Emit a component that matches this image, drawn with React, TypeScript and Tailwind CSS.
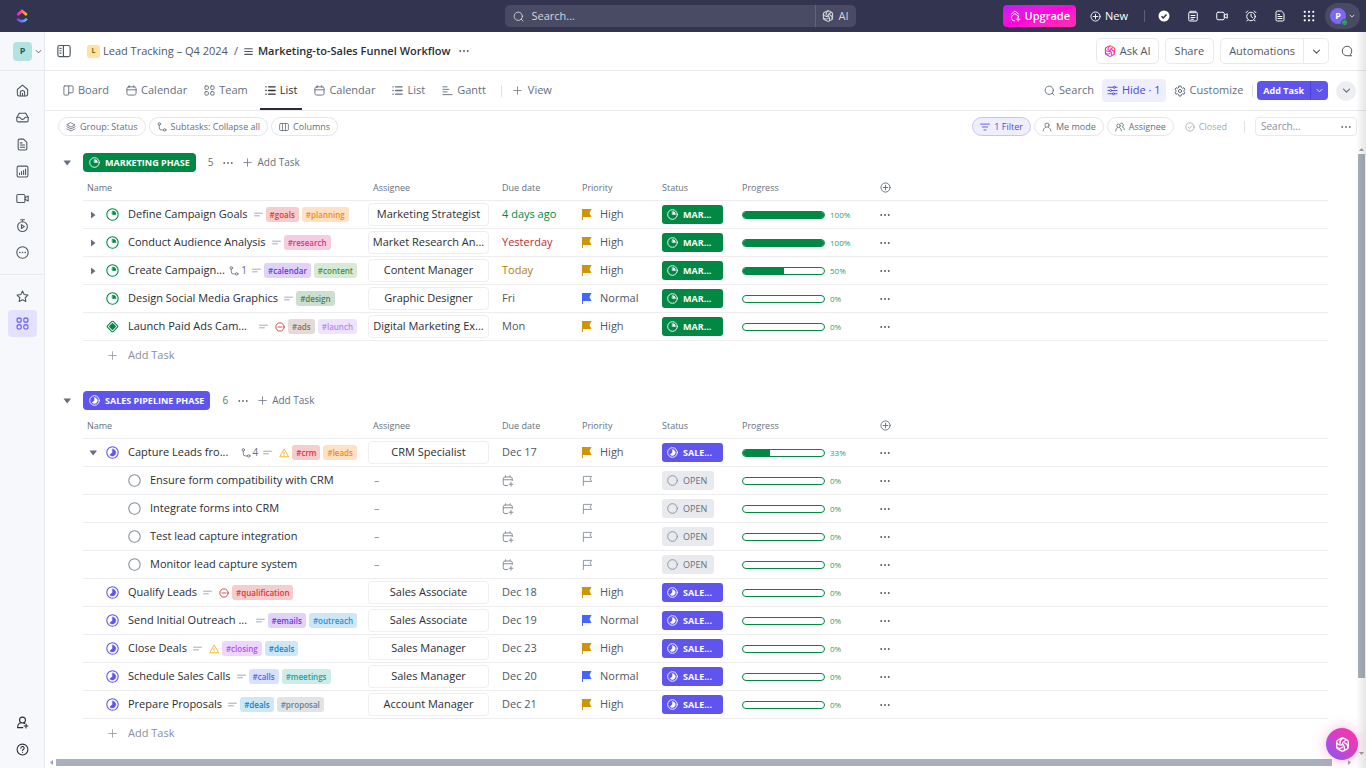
import { type ReactNode } from "react"

type IconProps = { className?: string; sw?: number; children?: ReactNode }

function Svg({ className = "size-3", sw = 2, children }: IconProps) {
  return (
    <svg
      className={`shrink-0 ${className}`}
      viewBox="0 0 24 24"
      fill="none"
      stroke="currentColor"
      strokeWidth={sw}
      strokeLinecap="round"
      strokeLinejoin="round"
      aria-hidden="true"
    >
      {children}
    </svg>
  )
}

const paths: Record<string, ReactNode> = {
  home: (
    <>
      <path d="M2.5 10.2 12 2l9.5 8.2V19a3 3 0 0 1-3 3h-13a3 3 0 0 1-3-3z" />
      <path d="M8 21.5V16a4 4 0 0 1 8 0v5.500M12 21.5V17" />
    </>
  ),
  inbox: (
    <>
      <path d="M1.5 12.500 5 5.500A3 3 0 0 1 7.700 4h8.600A3 3 0 0 1 19 5.500l3.500 7V17a3 3 0 0 1-3 3h-15a3 3 0 0 1-3-3z" />
      <path d="M1.5 11.500H6c1 0 1.500.5 2 1.500a4.500 4.500 0 0 0 8 0c.5-1 1-1.500 2-1.500h4.500" />
    </>
  ),
  doc: (
    <>
      <path d="M14 2H6.500A2.500 2.500 0 0 0 4 4.500v15A2.500 2.500 0 0 0 6.500 22h11a2.500 2.500 0 0 0 2.500-2.500V8z" />
      <path d="M8 9h3M8 13h8M8 17h8" />
    </>
  ),
  chart: (
    <>
      <rect x="2" y="2" width="20" height="20" rx="3" />
      <path d="M6.500 17.500V15M10.200 17.500V12M14 17.500V10M17.700 17.500V7.500" />
    </>
  ),
  video: (
    <>
      <rect x="1.5" y="4.5" width="15" height="15" rx="2.5" />
      <path d="M16.5 10.500 22.500 7.500v9l-6-3" />
    </>
  ),
  timer: (
    <>
      <circle cx="12" cy="14" r="9" />
      <path d="M8.5 1.500h7M12 1.500V5M10 10.500v7l5.500-3.500z" />
    </>
  ),
  more: (
    <>
      <circle cx="12" cy="12" r="10.5" />
      <path d="M7 12h.01M12 12h.01M17 12h.01" strokeWidth="3" />
    </>
  ),
  star: <path d="m12 2 3.100 6.400 6.900 1-5 4.900 1.200 7L12 18l-6.200 3.300 1.200-7-5-4.900 6.900-1z" />,
  grid: (
    <>
      <rect x="2" y="2" width="7.5" height="7.5" rx="2" />
      <rect x="14.5" y="2" width="7.5" height="7.5" rx="2" />
      <rect x="2" y="14.5" width="7.5" height="7.5" rx="2" />
      <rect x="14.5" y="14.5" width="7.5" height="7.5" rx="2" />
    </>
  ),
  invite: (
    <>
      <circle cx="12" cy="7.5" r="5.5" />
      <path d="M12.5 21.500H3c0-4.500 2.500-8 6-9M14 12.800l2 1M18.500 15v7M15 18.500h7" />
    </>
  ),
  help: (
    <>
      <circle cx="12" cy="12" r="10" />
      <path d="M9 9.500a3 3 0 1 1 4.500 2.500c-1 .6-1.500 1.200-1.500 2.200M12 17.500h.01" />
    </>
  ),
  search: (
    <>
      <circle cx="11.5" cy="11.5" r="9" />
      <path d="m18 18 4 4" />
    </>
  ),
  plus: <path d="M12 2v20M2 12h20" />,
  plusCircle: (
    <>
      <circle cx="12" cy="12" r="10" />
      <path d="M12 7v10M7 12h10" />
    </>
  ),
  down: <path d="m4 8.500 8 8 8-8" />,
  notepad: (
    <>
      <rect x="3.5" y="4" width="17" height="18" rx="2.5" />
      <path d="M8 2v4M12 2v4M16 2v4M8 11h8M8 15h8M8 18.500h5" />
    </>
  ),
  alarm: (
    <>
      <circle cx="12" cy="13" r="8.5" />
      <path d="M12 8.500V13l3 2M2 5.500 5.500 2M22 5.500 18.500 2M5.500 20 3.500 22M18.500 20l2 2" />
    </>
  ),
  apps: (
    <path
      d="M3.5 3.500h.01M12 3.500h.01M20.500 3.500h.01M3.500 12h.01M12 12h.01M20.500 12h.01M3.500 20.500h.01M12 20.500h.01M20.500 20.500h.01"
      strokeWidth="4.5"
    />
  ),
  sidebar: (
    <>
      <rect x="1.5" y="2.5" width="21" height="19" rx="3" />
      <path d="M11 2.500v19M5 7.500h2M5 11.500h2M5 15.500h2" />
    </>
  ),
  hamburger: <path d="M2 4.500h20M2 12h20M2 19.500h20" />,
  dots: <path d="M3 12h.01M12 12h.01M21 12h.01" strokeWidth="4.5" />,
  comment: <path d="M20.5 21.500H12a9.500 9.500 0 1 1 9.500-9.500c0 3-1 5-2.500 6.500z" />,
  board: (
    <path d="M4 2h16a2 2 0 0 1 2 2v11a2 2 0 0 1-2 2h-7.500V20a2 2 0 0 1-2 2H4a2 2 0 0 1-2-2V4a2 2 0 0 1 2-2zM12.500 2v16" />
  ),
  calendar: (
    <>
      <rect x="2" y="4" width="20" height="18" rx="4" />
      <path d="M2 10.500h20M7 1.500V5M17 1.500V5" />
    </>
  ),
  list: <path d="M2 4h.5M8 4h14M2 12h.5M8 12h14M2 20h.5M8 20h14" strokeWidth="3" />,
  gantt: <path d="M2 4h9M2 9.500h13M2 15h9M2 21h20" />,
  sliders: (
    <>
      <path d="M2 5h11M19 5h3M2 12h3M11 12h11M2 19h9M17 19h5" />
      <circle cx="16" cy="5" r="2.3" />
      <circle cx="8" cy="12" r="2.3" />
      <circle cx="14" cy="19" r="2.3" />
    </>
  ),
  gear: (
    <>
      <path d="M10 2h4l.7 3 2.300 1.400 3-.9 2 3.500-2.200 2v2l2.200 2-2 3.500-3-.9-2.300 1.400L14 22h-4l-.7-3L7 17.600l-3 .9L2 15l2.200-2v-2L2 9l2-3.500 3 .9L9.300 5z" />
      <circle cx="12" cy="12" r="3.2" />
    </>
  ),
  layers: <path d="m12 2 9.500 5L12 12 2.500 7zM2.500 11.500l9.500 5 9.500-5M2.500 16.500l9.500 5 9.500-5" />,
  subtask: (
    <>
      <circle cx="5.5" cy="4.5" r="3" />
      <circle cx="18.5" cy="19" r="3" />
      <path d="M5.5 7.500V14a5 5 0 0 0 5 5h5" />
    </>
  ),
  columns: (
    <>
      <rect x="1.5" y="3.5" width="21" height="17" rx="2.5" />
      <path d="M8.5 3.500v17M15.500 3.500v17" />
    </>
  ),
  filter: <path d="M1.5 5h21M5.500 12h13M9.500 19h5" />,
  person: (
    <>
      <circle cx="12" cy="7.5" r="5" />
      <path d="M2.5 21.500c1-5 3.500-7.500 6-8.700M21.500 21.500c-1-5-3.500-7.500-6-8.700" />
    </>
  ),
  people: (
    <>
      <circle cx="8.5" cy="9" r="4.2" />
      <path d="M1.5 21.500c.5-4 2-6.500 4.500-8M15.500 21.500c-.5-4-2-6.500-4.500-8M13.500 3.500a4.200 4.200 0 1 1 3.200 7.600c3 1 5 4 5.800 7.400" />
    </>
  ),
  checkCircle: (
    <>
      <circle cx="12" cy="12" r="10" />
      <path d="m7.500 12.500 3 3 6-6.500" />
    </>
  ),
  desc: <path d="M1.5 8.500h21M1.500 15.500h13" />,
  blocked: (
    <>
      <circle cx="12" cy="12" r="10" />
      <path d="M7 12h10" />
    </>
  ),
  warning: <path d="M12 3 1.800 21h20.400zM12 10v5M12 18h.01" />,
  dateAdd: (
    <>
      <path d="M11 21H6a3.500 3.500 0 0 1-3.500-3.500V7.500A3.500 3.500 0 0 1 6 4h11a3.500 3.500 0 0 1 3.500 3.500V11M2.500 9.500h18M7 1.500V4M16 1.500V4" />
      <path d="M18 14.500v8M14 18.500h8" />
    </>
  ),
  flag: <path d="M3 23V3h18l-3.500 5.500L21 14H3" />,
}

function Icon({ name, className, sw }: { name: string; className?: string; sw?: number }) {
  return (
    <Svg className={className} sw={sw}>
      {paths[name]}
    </Svg>
  )
}

// Swirled hexagon used by the AI entry points
function AiMark({ className, gradient }: { className?: string; gradient?: boolean }) {
  return (
    <svg
      className={`shrink-0 ${className}`}
      viewBox="0 0 24 24"
      fill="none"
      stroke={gradient ? "url(#ai-mark)" : "currentColor"}
      strokeWidth="2.1"
      strokeLinecap="round"
      strokeLinejoin="round"
      aria-hidden="true"
    >
      <defs>
        <linearGradient id="ai-mark" gradientUnits="userSpaceOnUse" x1="4" y1="22" x2="20" y2="2">
          <stop stopColor="#7b3ff5" />
          <stop offset=".5" stopColor="#fa12e3" />
          <stop offset="1" stopColor="#ff8a1f" />
        </linearGradient>
      </defs>
      <path d="M10.3 1.800a3.500 3.500 0 0 1 3.400 0l5.800 3.300a3.500 3.500 0 0 1 1.700 3v7.800a3.500 3.500 0 0 1-1.700 3l-5.800 3.300a3.500 3.500 0 0 1-3.400 0l-5.800-3.300a3.500 3.500 0 0 1-1.700-3V8.100a3.500 3.500 0 0 1 1.700-3z" />
      {[0, 120, 240].map((deg) => (
        <g key={deg} transform={`rotate(${deg} 12 12)`}>
          <path d="M12 12c-.6-3.500 1.200-5 6.800-7.200" />
          <path d="M8.200 10.400c-.8-3.600.4-6.400 4.600-8.600" />
        </g>
      ))}
    </svg>
  )
}

function Logo() {
  return (
    <svg className="h-4 w-3" viewBox="0 0 24 28" fill="none" strokeWidth="5.5" aria-hidden="true">
      <defs>
        <linearGradient id="logo-top" x1="0" x2="1">
          <stop stopColor="#ff02f0" />
          <stop offset="1" stopColor="#ffc800" />
        </linearGradient>
        <linearGradient id="logo-bottom" x1="0" x2="1">
          <stop stopColor="#8930fd" />
          <stop offset="1" stopColor="#49ccf9" />
        </linearGradient>
      </defs>
      <path d="M2.5 12 12 4l9.500 8" stroke="url(#logo-top)" />
      <path d="M2.5 19.500c5 6.500 14 6.500 19 0" stroke="url(#logo-bottom)" />
    </svg>
  )
}

type Kind = "marketing" | "sales" | "open" | "milestone"

function StatusIcon({ kind, className = "size-[13px]" }: { kind: Kind; className?: string }) {
  if (kind === "milestone") {
    return (
      <Svg className={className}>
        <rect x="4.5" y="4.5" width="15" height="15" rx="2.5" transform="rotate(45 12 12)" />
        <rect x="8" y="8" width="8" height="8" rx="1" fill="currentColor" transform="rotate(45 12 12)" />
      </Svg>
    )
  }
  return (
    <Svg className={className}>
      <circle cx="12" cy="12" r="10.5" />
      {kind === "marketing" && (
        <path d="M12 5.500a6.500 6.500 0 0 1 6.500 6.500H12z" fill="currentColor" strokeWidth="1" />
      )}
      {kind === "sales" && (
        <path d="M12 5.500A6.500 6.500 0 1 1 7 16.500l5-4.500z" fill="currentColor" strokeWidth="1" />
      )}
    </Svg>
  )
}

const tagStyles: Record<string, string> = {
  goals: "bg-[#f6cccc] text-[#d93838]",
  crm: "bg-[#f6cccc] text-[#d93838]",
  qualification: "bg-[#f6cccc] text-[#d93838]",
  planning: "bg-[#ffe2c4] text-[#f5871f]",
  leads: "bg-[#ffe2c4] text-[#f5871f]",
  research: "bg-[#f6cde0] text-[#d5387f]",
  calendar: "bg-[#dfd3fb] text-[#6b35e0]",
  emails: "bg-[#dfd3fb] text-[#6b35e0]",
  content: "bg-[#d6ead6] text-[#3f9142]",
  design: "bg-[#cddfd0] text-[#4b8052]",
  ads: "bg-[#e4dbd8] text-[#8d6e63]",
  launch: "bg-[#efe4ff] text-[#b388f5]",
  outreach: "bg-[#cde7f7] text-[#1e93d2]",
  deals: "bg-[#cde7f7] text-[#1583c5]",
  closing: "bg-[#efd6fd] text-[#b04ff0]",
  calls: "bg-[#dae0ff] text-[#4a66f5]",
  meetings: "bg-[#cdebe8] text-[#2aa198]",
  proposal: "bg-[#dfe4e7] text-[#6d808b]",
}

type Task = {
  name: string
  kind: Kind
  toggle?: "closed" | "open"
  subtasks?: number
  flagged?: "blocked" | "warning"
  tags?: string[]
  assignee?: string
  due?: string
  dueColor?: string
  priority?: "High" | "Normal"
  progress: number
}

type Group = { title: string; kind: "marketing" | "sales"; count: number; tasks: Task[] }

const groups: Group[] = [
  {
    title: "MARKETING PHASE",
    kind: "marketing",
    count: 5,
    tasks: [
      { name: "Define Campaign Goals", kind: "marketing", toggle: "closed", tags: ["goals", "planning"], assignee: "Marketing Strategist", due: "4 days ago", dueColor: "text-[#008844]", priority: "High", progress: 100 },
      { name: "Conduct Audience Analysis", kind: "marketing", toggle: "closed", tags: ["research"], assignee: "Market Research An...", due: "Yesterday", dueColor: "text-[#c62a2f]", priority: "High", progress: 100 },
      { name: "Create Campaign...", kind: "marketing", toggle: "closed", subtasks: 1, tags: ["calendar", "content"], assignee: "Content Manager", due: "Today", dueColor: "text-[#b27b16]", priority: "High", progress: 50 },
      { name: "Design Social Media Graphics", kind: "marketing", tags: ["design"], assignee: "Graphic Designer", due: "Fri", priority: "Normal", progress: 0 },
      { name: "Launch Paid Ads Cam...", kind: "milestone", flagged: "blocked", tags: ["ads", "launch"], assignee: "Digital Marketing Ex...", due: "Mon", priority: "High", progress: 0 },
    ],
  },
  {
    title: "SALES PIPELINE PHASE",
    kind: "sales",
    count: 6,
    tasks: [
      { name: "Capture Leads fro...", kind: "sales", toggle: "open", subtasks: 4, flagged: "warning", tags: ["crm", "leads"], assignee: "CRM Specialist", due: "Dec 17", priority: "High", progress: 33 },
      { name: "Ensure form compatibility with CRM", kind: "open", progress: 0 },
      { name: "Integrate forms into CRM", kind: "open", progress: 0 },
      { name: "Test lead capture integration", kind: "open", progress: 0 },
      { name: "Monitor lead capture system", kind: "open", progress: 0 },
      { name: "Qualify Leads", kind: "sales", flagged: "blocked", tags: ["qualification"], assignee: "Sales Associate", due: "Dec 18", priority: "High", progress: 0 },
      { name: "Send Initial Outreach ...", kind: "sales", tags: ["emails", "outreach"], assignee: "Sales Associate", due: "Dec 19", priority: "Normal", progress: 0 },
      { name: "Close Deals", kind: "sales", flagged: "warning", tags: ["closing", "deals"], assignee: "Sales Manager", due: "Dec 23", priority: "High", progress: 0 },
      { name: "Schedule Sales Calls", kind: "sales", tags: ["calls", "meetings"], assignee: "Sales Manager", due: "Dec 20", priority: "Normal", progress: 0 },
      { name: "Prepare Proposals", kind: "sales", tags: ["deals", "proposal"], assignee: "Account Manager", due: "Dec 21", priority: "High", progress: 0 },
    ],
  },
]

function Triangle({ open }: { open?: boolean }) {
  return (
    <svg className="size-2 shrink-0 text-[#656f7d]" viewBox="0 0 8 8" fill="currentColor" aria-hidden="true">
      {open ? <path d="M.5 1.500h7.500L4.200 6.500z" /> : <path d="M2 .5v7L6.500 4z" />}
    </svg>
  )
}

function NameCell({ task }: { task: Task }) {
  const sub = task.kind === "open"
  const iconColor = sub ? "text-[#87909e]" : task.kind === "sales" ? "text-[#5f55ee]" : "text-[#008844]"
  const cut = task.name.endsWith("...")
  return (
    <div className={`flex items-center whitespace-nowrap pr-[9px] ${sub ? "pl-7" : "pl-1.5"}`}>
      <span className="flex w-[17px] shrink-0">
        {task.toggle && (
          <button type="button" aria-label="Toggle subtasks">
            <Triangle open={task.toggle === "open"} />
          </button>
        )}
      </span>
      <button type="button" aria-label="Change status" className={iconColor}>
        <StatusIcon kind={task.kind} />
      </button>
      <a href="#task" className="ml-[9px] text-[#2a2e34]">{task.name}</a>
      {!sub && (
        <div className={`flex items-center gap-[3px] ${cut ? "ml-auto" : "ml-[6px]"}`}>
          {task.subtasks && (
            <span className="mr-[2px] flex items-center gap-[2px] text-[10px] text-[#656f7d]">
              <Icon name="subtask" className="size-2.5" />
              {task.subtasks}
            </span>
          )}
          <Icon name="desc" className="size-[9px] text-[#87909e]" />
          {task.flagged === "blocked" && <Icon name="blocked" className="ml-1 size-2.5 text-[#c62a2f]" />}
          {task.flagged === "warning" && <Icon name="warning" className="ml-1 size-2.5 text-[#f8ae00]" />}
          {task.tags?.map((tag) => (
            <span
              key={tag}
              className={`flex h-[15px] items-center rounded-[3px] px-1 text-[8px] font-semibold ${tagStyles[tag]}`}
            >
              #{tag}
            </span>
          ))}
        </div>
      )}
    </div>
  )
}

function PriorityFlag({ color }: { color: string }) {
  return (
    <svg className={`size-[11px] shrink-0 ${color}`} viewBox="0 0 11 11" fill="currentColor" aria-hidden="true">
      <path d="M0 0h9.500L7.500 4l2 4H1v3H0z" />
    </svg>
  )
}

function StatusPill({ kind }: { kind: Kind }) {
  if (kind === "open") {
    return (
      <button type="button" className="flex h-[19px] w-[52px] items-center gap-[5px] rounded-[3px] bg-[#e8eaed] pl-[5px] text-[9px] font-medium text-[#656f7d]">
        <StatusIcon kind="open" className="size-[11px] text-[#87909e]" />
        OPEN
      </button>
    )
  }
  const sales = kind === "sales"
  return (
    <button
      type="button"
      className={`flex h-[19px] w-[61px] items-center gap-[5px] rounded-[3px] px-[5px] text-[9px] font-bold text-white ${sales ? "bg-[#5f55ee]" : "bg-[#008844]"}`}
    >
      <StatusIcon kind={sales ? "sales" : "marketing"} className="size-[11px]" />
      {sales ? "SALE..." : "MAR..."}
    </button>
  )
}

function TaskRow({ task }: { task: Task }) {
  return (
    <tr className="h-7 [&>td]:border-b [&>td]:border-[#ededf0] [&>td]:p-0">
      <td><NameCell task={task} /></td>
      <td>
        {task.assignee ? (
          <button type="button" className="ml-[2px] block h-[23px] w-[121px] truncate rounded border border-[#eeeff1] text-center text-[#2a2e34]">
            {task.assignee}
          </button>
        ) : (
          <span className="pl-2 text-[#87909e]">–</span>
        )}
      </td>
      <td className={task.dueColor ?? "text-[#4f5762]"}>
        <div className="px-2">
          {task.due ?? (
            <button type="button" aria-label="Set due date" className="block text-[#87909e]">
              <Icon name="dateAdd" className="size-3" />
            </button>
          )}
        </div>
      </td>
      <td>
        <div className="flex items-center gap-[7px] px-2 text-[#4f5762]">
          {task.priority ? (
            <>
              <PriorityFlag color={task.priority === "High" ? "text-[#cf940a]" : "text-[#4466ff]"} />
              {task.priority}
            </>
          ) : (
            <button type="button" aria-label="Set priority" className="text-[#87909e]">
              <Icon name="flag" className="size-[11px]" />
            </button>
          )}
        </div>
      </td>
      <td><div className="px-2"><StatusPill kind={task.kind} /></div></td>
      <td>
        <div className="flex items-center gap-[5px] pl-2 text-[8px] text-[#2f9e66]">
          <div className="h-2 w-[83px] overflow-hidden rounded-full border border-[#008844]">
            <div className="h-full bg-[#008844]" style={{ width: `${task.progress}%` }} />
          </div>
          {task.progress}%
        </div>
      </td>
      <td>
        <button type="button" aria-label="Task options" className="block pl-[18px] text-[#4f5762]">
          <Icon name="dots" className="size-2.5" />
        </button>
      </td>
    </tr>
  )
}

function GroupSection({ group }: { group: Group }) {
  return (
    <section>
      <div className="flex h-[19px] items-center text-[10px] text-[#656f7d]">
        <button type="button" aria-label="Collapse group" className="flex w-5 shrink-0">
          <Triangle open />
        </button>
        <button
          type="button"
          className={`flex h-[19px] items-center gap-[5px] rounded px-[6px] text-[9px] font-bold text-white ${group.kind === "sales" ? "bg-[#5f55ee]" : "bg-[#008844]"}`}
        >
          <StatusIcon kind={group.kind} className="size-[11px]" />
          {group.title}
        </button>
        <span className="ml-3">{group.count}</span>
        <button type="button" aria-label="Group options" className="ml-2.5">
          <Icon name="dots" className="size-2.5" />
        </button>
        <button type="button" className="ml-2.5 flex items-center gap-[5px]">
          <Icon name="plus" className="size-[9px]" />
          Add Task
        </button>
      </div>
      <div className="pl-5">
        <table className="w-full table-fixed border-separate border-spacing-0 text-left text-[11px]">
          <colgroup>
            <col className="w-[283px]" />
            <col className="w-32" />
            <col className="w-20" />
            <col className="w-20" />
            <col className="w-20" />
            <col className="w-32" />
            <col />
          </colgroup>
          <thead>
            <tr className="h-[29px] text-[9px] text-[#656f7d] [&>th]:border-b [&>th]:border-[#ededf0] [&>th]:p-0 [&>th]:pt-[3px] [&>th]:font-normal">
              <th><div className="pl-1">Name</div></th>
              <th><div className="pl-[7px]">Assignee</div></th>
              <th><div className="pl-2">Due date</div></th>
              <th><div className="pl-2">Priority</div></th>
              <th><div className="pl-2">Status</div></th>
              <th><div className="pl-2">Progress</div></th>
              <th>
                <button type="button" aria-label="Add column" className="block pl-[18px]">
                  <Icon name="plusCircle" className="size-[11px]" />
                </button>
              </th>
            </tr>
          </thead>
          <tbody>
            {group.tasks.map((task) => (
              <TaskRow key={task.name} task={task} />
            ))}
          </tbody>
        </table>
        <button type="button" className="flex h-7 items-center gap-[11px] pl-[25px] text-[11px] text-[#87909e]">
          <Icon name="plus" className="size-[9px]" />
          Add Task
        </button>
      </div>
    </section>
  )
}

function TopBar() {
  return (
    <header className="grid h-8 shrink-0 grid-cols-[1fr_351px_1fr] items-center bg-[#33344f] pr-1.5 text-[11px] text-[#d5d6dc]">
      <a href="#home" aria-label="ClickUp" className="ml-4 w-fit"><Logo /></a>
      <div className="flex h-[22px] overflow-hidden rounded-[5px] bg-[#494a64]">
        <label className="flex flex-1 items-center gap-2 border-r border-[#62637a] pl-2">
          <Icon name="search" className="size-[11px]" />
          <input type="search" aria-label="Search" placeholder="Search..." className="w-full bg-transparent outline-none placeholder:text-[#d5d6dc]" />
        </label>
        <button type="button" className="flex w-10 items-center justify-center gap-1">
          <AiMark className="size-3" />
          AI
        </button>
      </div>
      <div className="flex items-center justify-end text-white">
        <button type="button" className="flex h-[22px] items-center gap-1 rounded bg-linear-to-br from-[#c215f0] via-[#ff02d9] to-[#ff2ea8] px-[6px] font-semibold">
          <Svg className="size-3">
            <path d="m5 8 7-6 7 6M5 13l7-6 7 6M19 12c0 1-.5 1.500-1 2M5 12.500v4A6 6 0 0 0 11 22M18 15v7M14.500 18.500h7" />
          </Svg>
          Upgrade
        </button>
        <button type="button" className="ml-[14px] flex items-center gap-1 font-medium">
          <Icon name="plusCircle" className="size-[11px]" />
          New
        </button>
        <span className="ml-4 h-3 w-px bg-[#5d5e75]" />
        <nav aria-label="Tools" className="ml-1 flex">
          <button type="button" aria-label="My work" className="flex w-[29px] justify-center">
            <svg className="size-3" viewBox="0 0 24 24" aria-hidden="true">
              <circle cx="12" cy="12" r="11" fill="#fff" />
              <path d="m7 12.500 3.500 3.500L17 9" fill="none" stroke="#33344f" strokeWidth="3" />
            </svg>
          </button>
          {["notepad", "video", "alarm", "doc", "apps"].map((name) => (
            <button key={name} type="button" aria-label={name} className="flex w-[29px] justify-center">
              <Icon name={name} className="size-3" />
            </button>
          ))}
        </nav>
        <button type="button" aria-label="Account" className="ml-[2px] flex h-[26px] items-center gap-[3px] rounded-full bg-[#494a64] px-[5px]">
          <span className="relative flex size-4 items-center justify-center rounded-full bg-[#7b68ee] text-[9px] font-bold">
            P
            <span className="absolute -bottom-0.5 -right-0.5 size-[7px] rounded-full border border-[#494a64] bg-[#28a35f]" />
          </span>
          <Icon name="down" className="size-[6px]" sw={3} />
        </button>
      </div>
    </header>
  )
}

function SideBar() {
  return (
    <aside className="flex w-[45px] shrink-0 flex-col border-r border-[#e8eaed] bg-[#f7f8fb] text-[#4f5762]">
      <button type="button" className="flex h-[39px] items-center gap-[3px] border-b border-[#e8eaed] pl-[13px]">
        <span className="flex size-[19px] shrink-0 items-center justify-center rounded bg-[#b2e3e0] text-[9px] font-bold text-[#1f5e5a]">P</span>
        <Icon name="down" className="size-[7px]" sw={3} />
      </button>
      <nav className="flex flex-col border-b border-[#e8eaed] pt-[6px] pb-2" aria-label="Main">
        {["home", "inbox", "doc", "chart", "video", "timer", "more"].map((name) => (
          <button key={name} type="button" aria-label={name} className="flex h-[27px] items-center justify-center">
            <Icon name={name} className="size-[13px]" />
          </button>
        ))}
      </nav>
      <nav className="flex flex-col items-center pt-2" aria-label="Spaces">
        <button type="button" aria-label="Favorites" className="flex h-[27px] items-center">
          <Icon name="star" className="size-[13px]" />
        </button>
        <button type="button" aria-label="Spaces" className="flex h-[27px] w-[29px] items-center justify-center rounded bg-[#e4e1fc] text-[#5f55ee]">
          <Icon name="grid" className="size-[13px]" />
        </button>
      </nav>
      <div className="mt-auto flex flex-col items-center pb-[5px] text-[#2a2e34]">
        {["invite", "help"].map((name) => (
          <button key={name} type="button" aria-label={name} className="flex h-[27px] items-center">
            <Icon name={name} className="size-[13px]" />
          </button>
        ))}
      </div>
    </aside>
  )
}

function Breadcrumbs() {
  const outline = "h-[26px] rounded-[5px] border border-[#e8eaed]"
  return (
    <div className="flex h-[39px] shrink-0 items-center border-b border-[#e8eaed] pl-3 pr-[13px] text-[11px] text-[#4f5762]">
      <button type="button" aria-label="Toggle sidebar"><Icon name="sidebar" className="size-[14px]" /></button>
      <a href="#space" className="ml-4 flex items-center gap-[3px]">
        <span className="flex size-[13px] items-center justify-center rounded-[3px] bg-[#ffe2a4] text-[7px] font-bold text-[#8a6412]">L</span>
        Lead Tracking – Q4 2024
      </a>
      <span className="mx-[6px]">/</span>
      <Icon name="hamburger" className="size-[9px]" sw={3} />
      <h1 className="ml-[5px] font-semibold text-[#2a2e34]">Marketing-to-Sales Funnel Workflow</h1>
      <button type="button" aria-label="List options" className="ml-2"><Icon name="dots" className="size-2.5" /></button>
      <div className="ml-auto flex items-center gap-[6px] font-medium">
        <button type="button" className={`${outline} flex items-center gap-1 px-[7px]`}>
          <AiMark gradient className="size-3" />
          Ask AI
        </button>
        <button type="button" className={`${outline} px-[9px]`}>Share</button>
        <div className={`${outline} flex`}>
          <button type="button" className="border-r border-[#e8eaed] px-2">Automations</button>
          <button type="button" aria-label="Automation options" className="flex w-6 items-center justify-center">
            <Icon name="down" className="size-[9px]" sw={3} />
          </button>
        </div>
        <button type="button" aria-label="Comments" className="ml-1.5"><Icon name="comment" className="size-3" /></button>
      </div>
    </div>
  )
}

const tabs = [
  { icon: "board", label: "Board" },
  { icon: "calendar", label: "Calendar" },
  { icon: "grid", label: "Team" },
  { icon: "list", label: "List", active: true },
  { icon: "calendar", label: "Calendar" },
  { icon: "list", label: "List" },
  { icon: "gantt", label: "Gantt" },
]

function ViewTabs() {
  return (
    <div className="flex h-10 shrink-0 items-center justify-between border-b border-[#e8eaed] pl-[13px] pr-[10px] text-[11px] text-[#656f7d]">
      <nav className="flex h-full items-center gap-[7px]" aria-label="Views">
        {tabs.map((tab, i) => (
          <a
            key={i}
            href="#view"
            className={`flex h-full items-center gap-1 border-b-2 px-[5px] pt-px ${tab.active ? "border-[#2a2e34] font-medium text-[#2a2e34]" : "border-transparent"}`}
          >
            <Icon name={tab.icon} className="size-[11px]" />
            {tab.label}
          </a>
        ))}
        <span className="ml-[3px] h-3 w-px bg-[#e0e2e6]" />
        <button type="button" className="ml-1 flex items-center gap-[6px]">
          <Icon name="plus" className="size-[9px]" />
          View
        </button>
      </nav>
      <div className="flex items-center">
        <button type="button" className="flex items-center gap-1"><Icon name="search" className="size-[11px]" />Search</button>
        <button type="button" className="ml-2 flex h-[23px] items-center gap-1 rounded bg-[#efeefd] px-[5px] font-medium text-[#5047d6]">
          <Icon name="sliders" className="size-[11px]" />
          Hide · 1
        </button>
        <button type="button" className="ml-2 flex items-center gap-1"><Icon name="gear" className="size-3" />Customize</button>
        <span className="ml-[9px] h-3 w-px bg-[#e0e2e6]" />
        <div className="ml-1 flex h-[19px] overflow-hidden rounded bg-[#5f55ee] text-[9px] font-bold text-white">
          <button type="button" className="border-r border-[#4b42cf] px-[6px]">Add Task</button>
          <button type="button" aria-label="Add options" className="flex w-[17px] items-center justify-center">
            <Icon name="down" className="size-[7px]" sw={3} />
          </button>
        </div>
        <button type="button" aria-label="Collapse header" className="ml-2 flex size-5 items-center justify-center rounded-full bg-[#edeef1]">
          <Icon name="down" className="size-[9px]" sw={3} />
        </button>
      </div>
    </div>
  )
}

function FilterBar() {
  const chip = "flex h-[19px] items-center gap-1 rounded-full border border-[#e4e6ea] px-[7px] font-medium"
  return (
    <div className="flex shrink-0 items-center justify-between pl-[13px] pr-[9px] pt-[6px] text-[9px] text-[#656f7d]">
      <div className="flex gap-[3px]">
        <button type="button" className={chip}><Icon name="layers" className="size-2.5" />Group: Status</button>
        <button type="button" className={chip}><Icon name="subtask" className="size-2.5" />Subtasks: Collapse all</button>
        <button type="button" className={chip}><Icon name="columns" className="size-2.5" />Columns</button>
      </div>
      <div className="flex items-center gap-[3px]">
        <button type="button" className="flex h-[19px] items-center gap-1 rounded-full border border-[#c9c4f8] bg-[#efeefd] px-[7px] font-medium text-[#5047d6]">
          <Icon name="filter" className="size-2.5" />
          1 Filter
        </button>
        <button type="button" className={chip}><Icon name="person" className="size-2.5" />Me mode</button>
        <button type="button" className={chip}><Icon name="people" className="size-2.5" />Assignee</button>
        <button type="button" className="ml-2 flex items-center gap-1 text-[#a3a9b3]">
          <Icon name="checkCircle" className="size-2.5" />
          Closed
        </button>
        <span className="ml-[14px] mr-[7px] h-3 w-px bg-[#e0e2e6]" />
        <div className="flex h-[19px] w-[102px] items-center rounded border border-[#e8eaed] px-[5px] text-[10px]">
          <input type="search" aria-label="Search tasks" placeholder="Search..." className="min-w-0 flex-1 bg-transparent outline-none placeholder:text-[#87909e]" />
          <button type="button" aria-label="Search options"><Icon name="dots" className="size-2.5" /></button>
        </div>
      </div>
    </div>
  )
}

function Arrow({ d }: { d: string }) {
  return (
    <svg className="size-[7px] shrink-0 text-[#9aa0aa]" viewBox="0 0 7 7" fill="currentColor" aria-hidden="true">
      <path d={d} />
    </svg>
  )
}

export default function App() {
  return (
    <div className="relative flex h-screen flex-col overflow-hidden bg-white font-['Open_Sans','Noto_Sans',sans-serif]">
      <TopBar />
      <div className="flex min-h-0 flex-1">
        <SideBar />
        <main className="flex min-w-0 flex-1 flex-col">
          <Breadcrumbs />
          <ViewTabs />
          <FilterBar />
          <div className="flex min-h-0 flex-1 pt-[10px]">
            <div className="flex min-w-0 flex-1 flex-col gap-[22px] overflow-hidden pl-[18px] pr-[29px] pt-[7px]">
              {groups.map((group) => (
                <GroupSection key={group.title} group={group} />
              ))}
            </div>
            <div className="flex w-[9px] flex-col items-center gap-px" aria-hidden="true">
              <Arrow d="M1 5h5L3.500 2z" />
              <div className="flex w-[7px] flex-1 flex-col">
                <div className="h-[88%] bg-[#a9b0bb]" />
              </div>
              <Arrow d="M1 2h5L3.500 5z" />
            </div>
          </div>
          <div className="flex h-[11px] shrink-0 items-center gap-px pl-[3px] pr-[13px]" aria-hidden="true">
            <Arrow d="M5 1v5L2 3.500z" />
            <div className="flex h-[7px] flex-1">
              <div className="w-[99%] bg-[#a9b0bb]" />
            </div>
            <Arrow d="M2 1v5l3-2.500z" />
          </div>
        </main>
      </div>
      <div className="pointer-events-none absolute bottom-0 right-0 top-8 w-2.5 bg-linear-to-r from-transparent to-black/10" />
      <button
        type="button"
        aria-label="Ask AI assistant"
        className="absolute bottom-2 right-2 flex size-8 items-center justify-center rounded-full bg-linear-to-tr from-[#7c4dff] via-[#d53fc4] to-[#ff2ea8] text-white shadow-[0_0_14px_rgba(255,60,160,0.35)]"
      >
        <AiMark className="size-[15px]" />
      </button>
    </div>
  )
}
